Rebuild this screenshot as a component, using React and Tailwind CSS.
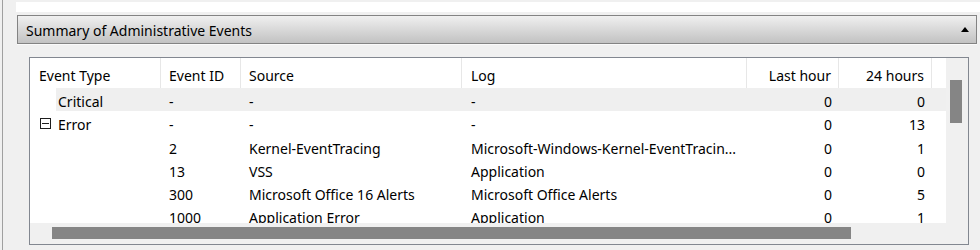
import React from 'react';

const ROWS = [
    { type: 'Critical', id: '-', source: '-', log: '-', hour: '0', day: '0', shaded: true },
    { type: 'Error', id: '-', source: '-', log: '-', hour: '0', day: '13', toggle: true },
    { id: '2', source: 'Kernel-EventTracing', log: 'Microsoft-Windows-Kernel-EventTracin...', hour: '0', day: '1' },
    { id: '13', source: 'VSS', log: 'Application', hour: '0', day: '0' },
    { id: '300', source: 'Microsoft Office 16 Alerts', log: 'Microsoft Office Alerts', hour: '0', day: '5' },
    { id: '1000', source: 'Application Error', log: 'Application', hour: '0', day: '1' },
];

function MinusBox() {
    return (
        <div className="w-[11px] h-[11px] border border-[#1e1e1e] flex items-center justify-center">
            <div className="w-[7px] h-px bg-[#1e1e1e]" />
        </div>
    );
}

function Row({ r }) {
    return (
        <div className="flex h-[23.25px] shrink-0">
            <div className="w-[26px] flex items-center pl-[10px] pt-[2px]">{r.toggle && <MinusBox />}</div>
            <div className={`flex flex-1 items-center pt-[5px] ${r.shaded ? 'bg-[#efefef]' : ''}`}>
                <div className="w-[105px] pl-[2px]">{r.type}</div>
                <div className="w-[80px] pl-[8px]">{r.id}</div>
                <div className="w-[221px] pl-[8px] whitespace-nowrap">{r.source}</div>
                <div className="w-[285px] pl-[9px] whitespace-nowrap">{r.log}</div>
                <div className="w-[92px] pr-[7px] text-right">{r.hour}</div>
                <div className="w-[93px] pr-[7px] text-right">{r.day}</div>
            </div>
        </div>
    );
}

function HeaderRow() {
    return (
        <div className="flex h-[30px] shrink-0 items-center">
            <div className="w-[131px] h-full flex items-center pl-[9px] pt-[5px] border-r border-[#e7e7e7]">Event Type</div>
            <div className="w-[80px] h-full flex items-center pl-[8px] pt-[5px] border-r border-[#e7e7e7]">Event ID</div>
            <div className="w-[221px] h-full flex items-center pl-[8px] pt-[5px] border-r border-[#e7e7e7]">Source</div>
            <div className="w-[285px] h-full flex items-center pl-[9px] pt-[5px] border-r border-[#e7e7e7]">Log</div>
            <div className="w-[92px] h-full flex items-center justify-end pr-[7px] pt-[5px] border-r border-[#e7e7e7]">Last hour</div>
            <div className="w-[93px] h-full flex items-center justify-end pr-[7px] pt-[5px] border-r border-[#e7e7e7]">24 hours</div>
        </div>
    );
}

export default function App() {
    return (
        <div className="w-[980px] h-[250px] overflow-hidden flex bg-[#f0f0f0] text-[14px] leading-none text-black font-['Noto_Sans',sans-serif]">
            <div className="w-[2px]" />
            <div className="w-px bg-[#a0a0a0]" />
            <div className="flex-1 flex flex-col">
                {/* strip left over from the pane above */}
                <div className="ml-[13px] mt-[2px] h-[10px] bg-white" />

                <div className="ml-[14px] mr-[3px] mt-[3px] flex flex-col">
                    <div className="h-[29px] flex items-center justify-between px-[8px] border border-[#838383] bg-linear-to-b from-[#f0f0f0] to-[#c2c2c2]">
                        <span className="pt-[2px]">Summary of Administrative Events</span>
                        <svg width="8" height="5" viewBox="0 0 8 5" className="mr-[-1px]">
                            <polygon points="0,5 8,5 4,0" fill="#000" />
                        </svg>
                    </div>
                    <div className="h-px bg-[#fafafa]" />

                    <div className="pl-[12px] pr-[8px] pt-[12px]">
                        <div className="h-[188px] border border-[#828790] bg-white flex flex-col">
                            <div className="flex-1 flex min-h-0">
                                <div className="flex-1 flex flex-col overflow-hidden">
                                    <HeaderRow />
                                    {ROWS.map((r, i) => <Row key={i} r={r} />)}
                                </div>
                                <div className="w-[22px] bg-[#f0f0f0] pt-[22px] pl-[4px]">
                                    <div className="w-[12px] h-[43px] bg-[#858585]" />
                                </div>
                            </div>
                            <div className="h-[21px] shrink-0 bg-[#f0f0f0] pt-[4px] pl-[22px]">
                                <div className="w-[799px] h-[12px] bg-[#858585]" />
                            </div>
                        </div>
                    </div>
                </div>
            </div>
        </div>
    );
}
